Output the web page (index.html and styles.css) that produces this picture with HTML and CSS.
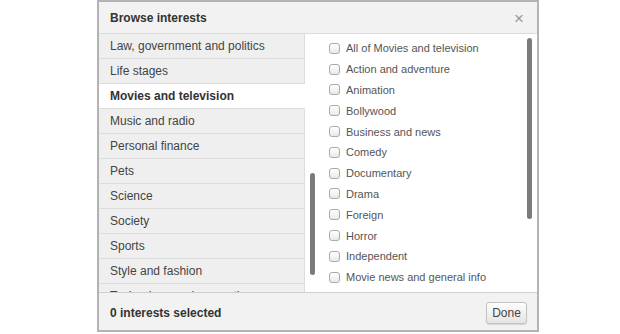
FILE: index.html
```html
<!DOCTYPE html>
<html lang="en">
<head>
    <meta charset="UTF-8">
    <title>Browse interests</title>
    <link rel="stylesheet" href="styles.css">
</head>
<body>
    <!-- interests dialog -->
    <div class="modal">
        <div class="modal-header">
            <span class="modal-title">Browse interests</span>
            <span class="close">&times;</span>
        </div>

        <div class="modal-body">
            <!-- left: categories -->
            <div class="categories">
                <ul class="cat-list">
                    <li>Law, government and politics</li>
                    <li>Life stages</li>
                    <li class="active">Movies and television</li>
                    <li>Music and radio</li>
                    <li>Personal finance</li>
                    <li>Pets</li>
                    <li>Science</li>
                    <li>Society</li>
                    <li>Sports</li>
                    <li>Style and fashion</li>
                    <li>Technology and computing</li>
                </ul>
                <div class="gutter cat-gutter"><div class="thumb"></div></div>
            </div>

            <!-- right: sub interests -->
            <div class="subs">
                <ul class="sub-list">
                    <li><input type="checkbox"> All of Movies and television</li>
                    <li><input type="checkbox"> Action and adventure</li>
                    <li><input type="checkbox"> Animation</li>
                    <li><input type="checkbox"> Bollywood</li>
                    <li><input type="checkbox"> Business and news</li>
                    <li><input type="checkbox"> Comedy</li>
                    <li><input type="checkbox"> Documentary</li>
                    <li><input type="checkbox"> Drama</li>
                    <li><input type="checkbox"> Foreign</li>
                    <li><input type="checkbox"> Horror</li>
                    <li><input type="checkbox"> Independent</li>
                    <li><input type="checkbox"> Movie news and general info</li>
                    <li><input type="checkbox"> Music</li>
                </ul>
                <div class="gutter sub-gutter"><div class="thumb"></div></div>
            </div>
        </div>

        <div class="modal-footer">
            <span class="count">0 interests selected</span>
            <button class="done">Done</button>
        </div>
    </div>
</body>
</html>
```

FILE: styles.css
```css
* {
    margin: 0;
    padding: 0;
    box-sizing: border-box;
}

body {
    background: #fff;
    font-family: "Liberation Sans", Arial, sans-serif;
    color: #444;
}

/* dialog frame */
.modal {
    margin-left: 97px;
    width: 442px;
    height: 332px;
    border: 2px solid #b3b3b3;
    display: flex;
    flex-direction: column;
    overflow: hidden;
}

.modal-header {
    height: 32px;
    flex: none;
    background: #f2f2f2;
    border-bottom: 1px solid #dcdcdc;
    display: flex;
    align-items: center;
    justify-content: space-between;
    padding: 0 13px 0 11px;
}

.modal-title {
    font-size: 12px;
    font-weight: bold;
    color: #333;
}

.close {
    font-size: 17px;
    color: #999;
    line-height: 1;
    padding-top: 2px;
}

.modal-body {
    flex: 1;
    display: flex;
    min-height: 0;
    overflow: hidden;
}

/* categories column */
.categories {
    width: 220px;
    flex: none;
    display: flex;
    background: #fff;
}

.cat-list {
    list-style: none;
    width: 206px;
    flex: none;
}

.cat-list li {
    height: 25px;
    line-height: 24px;
    font-size: 12px;
    padding-left: 11px;
    background: #efefef;
    border-bottom: 1px solid #dddddd;
    border-right: 1px solid #dddddd;
    color: #444;
    white-space: nowrap;
}

.cat-list li.active {
    background: #fff;
    font-weight: bold;
    color: #333;
    border-right-color: #fff;
}

/* overlay scrollbars */
.gutter {
    flex: none;
    width: 14px;
}

.thumb {
    width: 5px;
    border-radius: 3px;
    background: #7b7b7b;
}

.cat-gutter .thumb {
    margin: 139px 0 0 5px;
    height: 102px;
}

.sub-gutter .thumb {
    margin: 4px 0 0 4px;
    height: 181px;
}

/* sub interests column */
.subs {
    flex: 1;
    display: flex;
}

.sub-list {
    list-style: none;
    flex: 1;
    padding: 4px 0 0 10px;
}

.sub-list li {
    height: 20.8px;
    display: flex;
    align-items: center;
    font-size: 11px;
    color: #555;
    white-space: nowrap;
}

.sub-list input {
    appearance: none;
    -webkit-appearance: none;
    width: 11px;
    height: 11px;
    border: 1px solid #aaa;
    border-radius: 3px;
    background: linear-gradient(#fff, #e9e9e9);
    margin-right: 6px;
    flex: none;
}

/* footer */
.modal-footer {
    height: 38px;
    flex: none;
    background: #f2f2f2;
    border-top: 1px solid #cfcfcf;
    display: flex;
    align-items: center;
    justify-content: space-between;
    padding: 3px 10px 0 11px;
}

.count {
    font-size: 12px;
    font-weight: bold;
    color: #333;
}

.done {
    width: 41px;
    height: 22px;
    font-family: inherit;
    font-size: 12px;
    color: #444;
    border: 1px solid #c2c2c2;
    border-radius: 3px;
    background: linear-gradient(#fdfdfd, #e4e4e4);
    box-shadow: 0 1px 1px rgba(0, 0, 0, 0.12);
}
```
